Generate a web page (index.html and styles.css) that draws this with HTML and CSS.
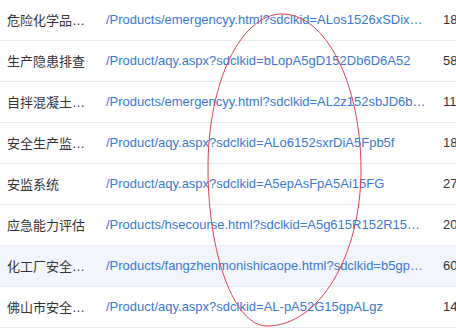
FILE: index.html
```html
<!DOCTYPE html>
<html lang="zh">
<head>
<meta charset="utf-8">
<link rel="stylesheet" href="styles.css">
</head>
<body>
<div class="wrap">
<table class="tbl">
<colgroup><col class="c1"><col class="c2"><col class="c3"></colgroup>
<tbody>
<tr><td class="name">危险化学品企业安全风险</td><td class="url">/Products/emergencyy.html?sdclkid=ALos1526xSDixAbcd</td><td class="num">18</td></tr>
<tr><td class="name">生产隐患排查</td><td class="url">/Product/aqy.aspx?sdclkid=bLopA5gD152Db6D6A52</td><td class="num">58</td></tr>
<tr><td class="name">自拌混凝土搅拌站</td><td class="url">/Products/emergencyy.html?sdclkid=AL2z152sbJD6bAbcd</td><td class="num">11</td></tr>
<tr><td class="name">安全生产监管平台</td><td class="url">/Product/aqy.aspx?sdclkid=ALo6152sxrDiA5Fpb5f</td><td class="num">18</td></tr>
<tr><td class="name">安监系统</td><td class="url">/Product/aqy.aspx?sdclkid=A5epAsFpA5Ai15FG</td><td class="num">27</td></tr>
<tr><td class="name">应急能力评估</td><td class="url">/Products/hsecourse.html?sdclkid=A5g615R152R15Abcd</td><td class="num">20</td></tr>
<tr class="hl"><td class="name">化工厂安全管理</td><td class="url">/Products/fangzhenmonishicaope.html?sdclkid=b5gpAbcd</td><td class="num">60</td></tr>
<tr><td class="name">佛山市安全生产</td><td class="url">/Product/aqy.aspx?sdclkid=AL-pA52G15gpALgz</td><td class="num">14</td></tr>
</tbody>
</table>
<svg class="mark" width="456" height="332" viewBox="0 0 456 332"><path d="M282 14 C326 14 361 84 361 170 C361 256 319 326 267 326 C234 326 208 254 208 168 C208 82 241 14 282 14 Z" fill="none" stroke="#e0404f" stroke-width="1"/></svg>
</div>
</body>
</html>
```
FILE: styles.css
```css
html, body { margin: 0; padding: 0; background: #fff; overflow: hidden; }
.wrap { position: relative; width: 456px; height: 332px; overflow: hidden; }
.tbl { margin-top: -1px; border-collapse: collapse; table-layout: fixed; width: 520px; font-family: "Liberation Sans", "Noto Sans CJK SC", sans-serif; font-size: 13px; }
.c1 { width: 99px; }
.c2 { width: 336px; }
.c3 { width: 85px; }
.tbl td { height: 41px; padding: 0 7px; border-bottom: 1px solid #e9ebee; white-space: nowrap; overflow: hidden; text-overflow: ellipsis; box-sizing: border-box; vertical-align: middle; }
.tbl td.num { padding-left: 8px; color: #333; }
.name { color: #333; }
.url { color: #3a78d4; }
.hl td { background: #f2f5fb; }
.mark { position: absolute; left: 0; top: 0; pointer-events: none; }
```
